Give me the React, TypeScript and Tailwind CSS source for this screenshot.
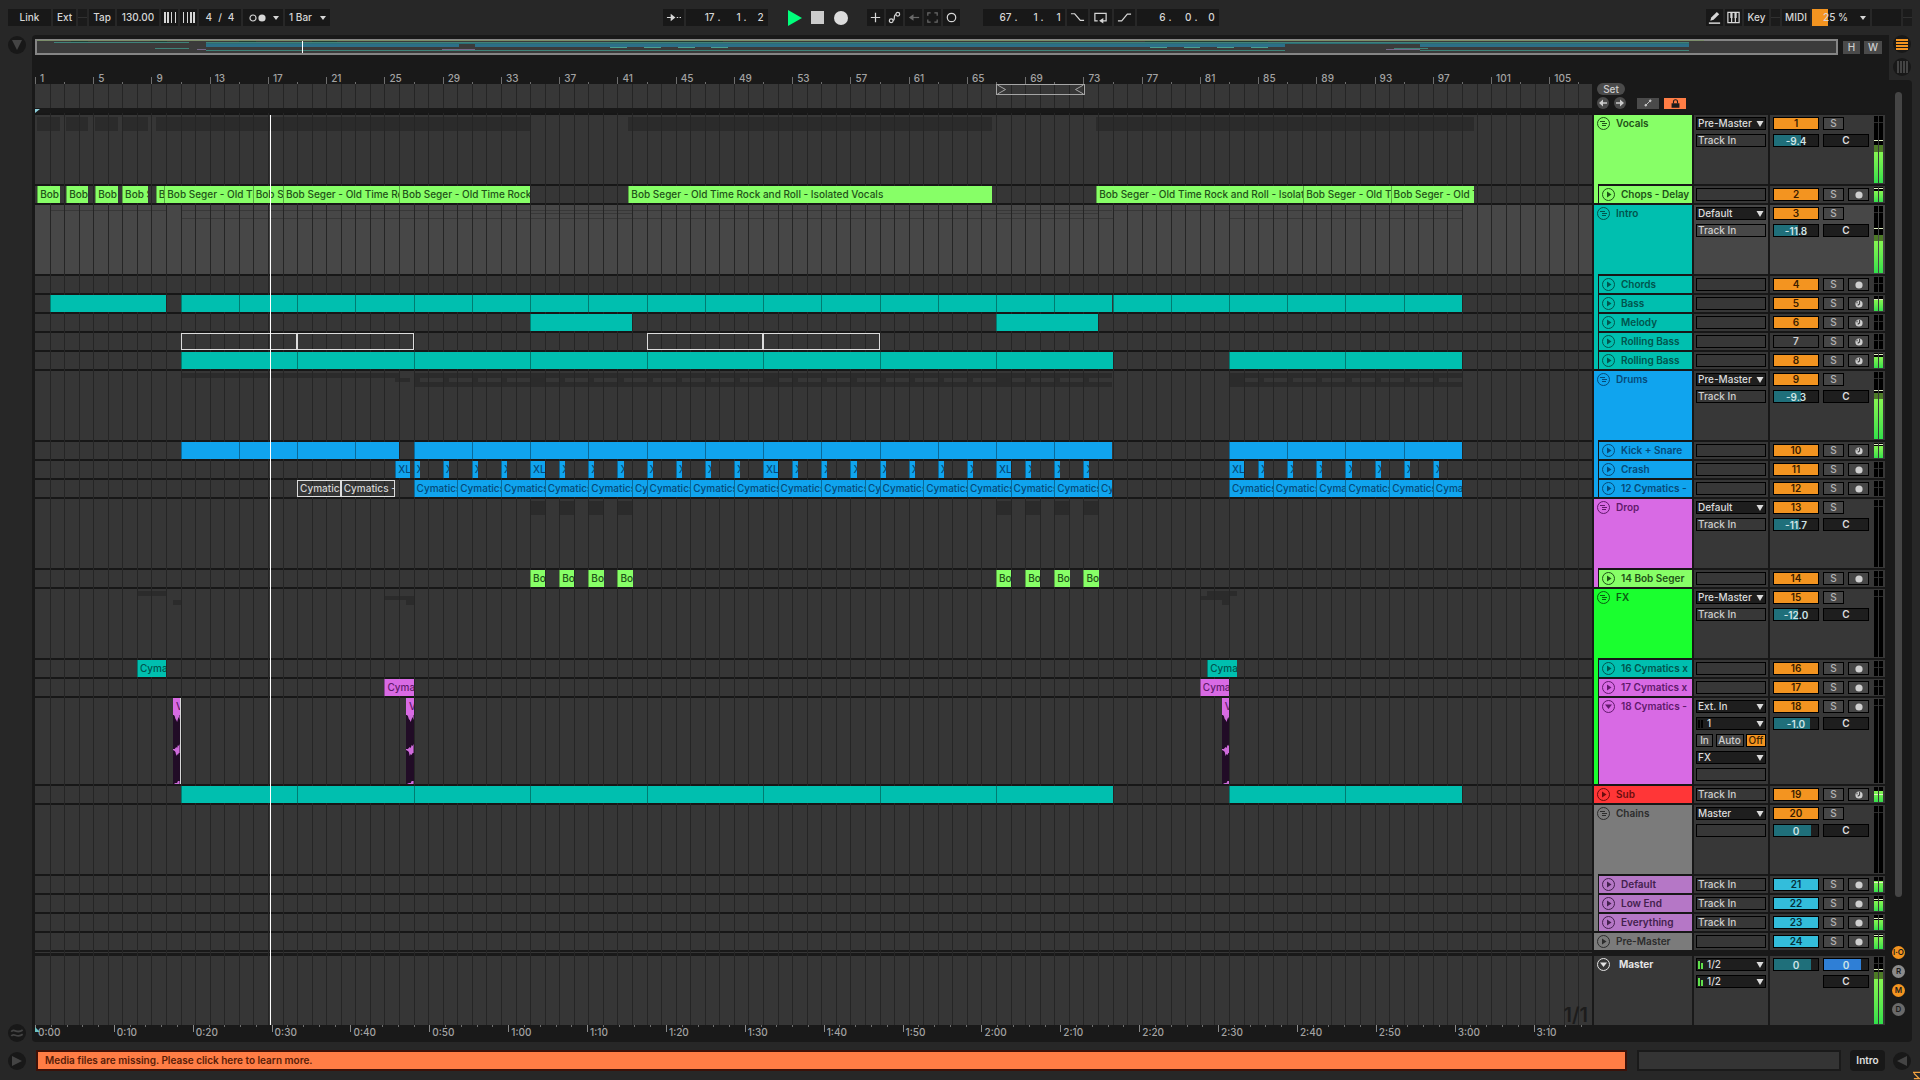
import { ReactNode } from "react";
import { clsx } from "clsx";

type Color =
	| "green"
	| "teal"
	| "blue"
	| "pink"
	| "lime"
	| "red"
	| "gray"
	| "purple"
	| "master";

interface Clip {
	from: number;
	to: number;
	label?: string;
	color?: Color;
	muted?: boolean;
	wave?: boolean;
	edge?: boolean;
}

interface Level {
	now: number;
	hold: number;
	peak: number;
}

interface Track {
	id: number;
	name: string;
	color: Color;
	size: "folder" | "small" | "tall";
	parent?: Color;
	output?: string;
	input?: string;
	volume?: string;
	fill?: number;
	arm?: "audio" | "midi";
	state?: "on" | "off" | "return";
	selected?: boolean;
	level?: Level;
	clips: Clip[];
}

// visible range of the arrangement
const BARS = 106.93;
const SECONDS = BARS * (240 / 130);

const COLORS: Record<Color, string> = {
	green: "bg-[#87ff67] text-[#1f5218]",
	teal: "bg-[#00bfaf] text-[#00554d]",
	blue: "bg-[#10a4ee] text-[#064a78]",
	pink: "bg-[#d86ae4] text-[#611a6c]",
	lime: "bg-[#1aff2f] text-[#0b5a12]",
	red: "bg-[#ff3637] text-[#6b0d0d]",
	gray: "bg-[#7b7b7b] text-[#2c2c2c]",
	purple: "bg-[#b577c6] text-[#43214d]",
	master: "bg-[#373737] text-[#e4e4e4]",
};

const HEIGHTS = {
	folder: "h-[71px]",
	small: "h-[19px]",
	tall: "h-[88px]",
};

const SEGER = "Bob Seger - Old Time Rock and Roll - Isolated Vocals";
const CYMATICS = "Cymatics - Loop";

const chain = (stops: number[], label?: string, rest: Partial<Clip> = {}): Clip[] =>
	stops.slice(1).map((to, index) => ({ from: stops[index], to, label, ...rest }));

const steps = (from: number, to: number, step: number, label?: string): Clip[] => {
	const stops: number[] = [];
	for (let bar = from; bar < to; bar += step) stops.push(bar);
	return chain([...stops, to], label);
};

const hits = (bars: number[], length: number, label: string): Clip[] =>
	bars.map((from) => ({ from, to: from + length, label }));

const tracks: Track[] = [
	{ id: 1, name: "Vocals", color: "green", size: "folder", output: "Pre-Master", input: "Track In", volume: "-9.4", fill: 61, level: { now: 47, hold: 57, peak: 62 }, clips: [] },
	{
		id: 2, name: "Chops - Delay", color: "green", size: "small", parent: "green", arm: "audio", level: { now: 72, hold: 76, peak: 84 },
		clips: [
			{ from: 1.15, to: 2.72, label: SEGER },
			{ from: 3.14, to: 4.65, label: SEGER },
			{ from: 5.13, to: 6.67, label: SEGER },
			{ from: 6.98, to: 8.78, label: SEGER },
			{ from: 9.3, to: 9.84, label: SEGER },
			...chain([9.88, 15.95, 18.03, 26.02, 35], SEGER),
			{ from: 41.75, to: 66.75, label: SEGER },
			...chain([73.88, 88.1, 94.1, 99.85], SEGER),
		],
	},
	{ id: 3, name: "Intro", color: "teal", size: "folder", output: "Default", input: "Track In", volume: "-11.8", fill: 54, selected: true, level: { now: 48, hold: 57, peak: 66 }, clips: [] },
	{ id: 4, name: "Chords", color: "teal", size: "small", parent: "teal", arm: "audio", clips: [] },
	{ id: 5, name: "Bass", color: "teal", size: "small", parent: "teal", arm: "midi", level: { now: 74, hold: 74, peak: 74 }, clips: [{ from: 2, to: 10 }, ...steps(11, 99, 4)] },
	{ id: 6, name: "Melody", color: "teal", size: "small", parent: "teal", arm: "midi", clips: [{ from: 35, to: 42 }, { from: 67, to: 74 }] },
	{ id: 7, name: "Rolling Bass", color: "teal", size: "small", parent: "teal", arm: "midi", state: "off", clips: [...chain([11, 19, 27], "", { muted: true }), ...chain([43, 51, 59], "", { muted: true })] },
	{ id: 8, name: "Rolling Bass", color: "teal", size: "small", parent: "teal", arm: "midi", level: { now: 76, hold: 76, peak: 88 }, clips: [...steps(11, 75, 8), ...steps(83, 99, 8)] },
	{ id: 9, name: "Drums", color: "blue", size: "folder", output: "Pre-Master", input: "Track In", volume: "-9.3", fill: 61, level: { now: 60, hold: 68, peak: 71 }, clips: [] },
	{ id: 10, name: "Kick + Snare", color: "blue", size: "small", parent: "blue", arm: "midi", level: { now: 78, hold: 78, peak: 90 }, clips: [...steps(11, 26, 4), ...steps(27, 75, 4), ...steps(83, 99, 4)] },
	{
		id: 11, name: "Crash", color: "blue", size: "small", parent: "blue", arm: "audio",
		clips: [
			...hits([25.74, 35, 51, 67, 83], 1, "XL Crash"),
			...hits([27, 29, 31, 33, 37, 39, 41, 43, 45, 47, 49, 53, 55, 57, 59, 61, 63, 65, 69, 71, 73, 85, 87, 89, 91, 93, 95, 97], 0.42, "XL Crash"),
		],
	},
	{
		id: 12, name: "12 Cymatics -", color: "blue", size: "small", parent: "blue", arm: "audio",
		clips: [
			...chain([19, 22, 25.7], CYMATICS, { muted: true }),
			...chain([27, 30, 33, 36, 39, 42, 43, 46, 49, 52, 55, 58, 59, 62, 65, 68, 71, 74, 75], CYMATICS),
			...chain([83, 86, 89, 91, 94, 97, 99], CYMATICS),
		],
	},
	{ id: 13, name: "Drop", color: "pink", size: "folder", output: "Default", input: "Track In", volume: "-11.7", fill: 57, clips: [] },
	{ id: 14, name: "14 Bob Seger", color: "green", size: "small", parent: "pink", arm: "audio", clips: hits([35, 37, 39, 41, 67, 69, 71, 73], 1.05, SEGER) },
	{ id: 15, name: "FX", color: "lime", size: "folder", output: "Pre-Master", input: "Track In", volume: "-12.0", fill: 54, clips: [] },
	{ id: 16, name: "16 Cymatics x", color: "teal", size: "small", parent: "lime", arm: "audio", clips: [{ from: 8, to: 10, label: CYMATICS }, { from: 81.5, to: 83.57, label: CYMATICS }] },
	{ id: 17, name: "17 Cymatics x", color: "pink", size: "small", parent: "lime", arm: "audio", clips: [{ from: 25, to: 27, label: CYMATICS }, { from: 81, to: 83, label: CYMATICS }] },
	{
		id: 18, name: "18 Cymatics -", color: "pink", size: "tall", parent: "lime", arm: "audio", volume: "-1.0", fill: 81,
		clips: [
			{ from: 10.48, to: 11, label: "Vox", wave: true, edge: true },
			{ from: 26.48, to: 27, label: "Vox", wave: true },
			{ from: 82.5, to: 83, label: "Vox", wave: true },
		],
	},
	{
		id: 19, name: "Sub", color: "red", size: "small", input: "Track In", arm: "midi", level: { now: 72, hold: 72, peak: 50 },
		clips: [...steps(11, 75, 8), ...steps(83, 99, 8)].map((clip) => ({ ...clip, color: "teal" as Color })),
	},
	{ id: 20, name: "Chains", color: "gray", size: "folder", output: "Master", input: "", volume: "0", fill: 83, clips: [] },
	{ id: 21, name: "Default", color: "purple", size: "small", parent: "gray", input: "Track In", arm: "audio", state: "return", level: { now: 72, hold: 72, peak: 62 }, clips: [] },
	{ id: 22, name: "Low End", color: "purple", size: "small", parent: "gray", input: "Track In", arm: "audio", state: "return", level: { now: 66, hold: 66, peak: 72 }, clips: [] },
	{ id: 23, name: "Everything", color: "purple", size: "small", parent: "gray", input: "Track In", arm: "audio", state: "return", level: { now: 68, hold: 68, peak: 76 }, clips: [] },
	{ id: 24, name: "Pre-Master", color: "gray", size: "small", arm: "audio", state: "return", level: { now: 78, hold: 78, peak: 88 }, clips: [] },
];

const at = (bar: number) => `${((bar - 1) / BARS) * 100}%`;
const span = (clip: Clip) => ({
	left: at(clip.from),
	width: `${((clip.to - clip.from) / BARS) * 100}%`,
});

// about three letters fit in one bar
const fit = (clip: Clip) => clip.label?.slice(0, Math.ceil((clip.to - clip.from) * 3.1 - 0.4));

const Cell = ({ className, children, label }: { className?: string; children?: ReactNode; label?: string }) => (
	<button
		type="button"
		aria-label={label}
		className={clsx("flex h-[17px] shrink-0 items-center justify-center bg-[#181818] text-[#d6d6d6]", className)}
	>
		{children}
	</button>
);

const Led = () => (
	<div className="flex h-[17px] w-[9px] shrink-0 items-center bg-[#1b1b1b]">
		<div className="h-px w-full bg-[#303030]" />
	</div>
);

const Glyph = ({ children, className = "h-[15px] w-[15px]" }: { children: ReactNode; className?: string }) => (
	<svg viewBox="0 0 16 16" className={className} fill="none" stroke="currentColor" strokeWidth="1.3">
		{children}
	</svg>
);

const Caret = () => (
	<svg viewBox="0 0 6 4" className="ml-auto h-[4px] w-[6px]" fill="currentColor">
		<path d="M0 0h6L3 4z" />
	</svg>
);

const Position = ({ values, label }: { values: string[]; label: string }) => (
	<button type="button" aria-label={label} className="flex h-[17px] w-[82px] shrink-0 items-center justify-end bg-[#181818] pr-[4px] text-[#d6d6d6]">
		{values.map((value, index) => (
			<span key={index} className={clsx("flex justify-end gap-[3px]", index === 2 ? "w-[17px]" : "w-[26px]")}>
				<span>{value}</span>
				{index < 2 && <span>.</span>}
			</span>
		))}
	</button>
);

const Toolbar = () => (
	<header className="flex h-[35px] items-start px-[8px] pt-[9px]">
		<div className="flex gap-[2px]">
			<Cell className="w-[43px]">Link</Cell>
			<Cell className="w-[23px]">Ext</Cell>
			<Led />
			<Cell className="w-[26px]">Tap</Cell>
			<Cell className="w-[42px]">130.00</Cell>
			<Cell className="w-[17px]" label="Nudge down">
				<svg viewBox="0 0 12 11" className="h-[11px] w-[12px]" fill="currentColor">
					<path d="M0 0h2v11H0zM3 0h2v11H3zM7 0h1v11H7zM11 0h1v11h-1z" />
				</svg>
			</Cell>
			<Cell className="w-[17px]" label="Nudge up">
				<svg viewBox="0 0 12 11" className="h-[11px] w-[12px]" fill="currentColor">
					<path d="M0 0h1v11H0zM4 0h1v11H4zM7 0h2v11H7zM10 0h2v11h-2z" />
				</svg>
			</Cell>
			<Cell className="w-[42px] gap-[6px]">
				<span>4</span>
				<span>/</span>
				<span>4</span>
			</Cell>
			<Cell className="w-[40px] pr-[4px] pl-[6px]" label="Metronome">
				<svg viewBox="0 0 17 8" className="h-[8px] w-[17px]">
					<circle cx="4" cy="4" r="3" fill="none" stroke="currentColor" strokeWidth="1.2" />
					<circle cx="13" cy="4" r="3.6" fill="currentColor" />
				</svg>
				<Caret />
			</Cell>
			<Cell className="w-[45px] pr-[4px] pl-[4px]">
				<span>1 Bar</span>
				<Caret />
			</Cell>
		</div>
		<div className="flex-[333]" />
		<div className="flex items-center gap-[2px]">
			<Cell className="w-[21px]" label="Follow">
				<Glyph className="h-[15px] w-[17px]">
					<path d="M1 8h5M11.5 8h1.5M14.5 8h1.5" />
					<path d="M5 4l5 4-5 4z" fill="currentColor" stroke="none" />
				</Glyph>
			</Cell>
			<Position values={["17", "1", "2"]} label="Arrangement position" />
			<button type="button" aria-label="Play" className="ml-[18px] text-[#00ff7b]">
				<svg viewBox="0 0 14 16" className="h-[16px] w-[14px]" fill="currentColor">
					<path d="M0 0l14 8-14 8z" />
				</svg>
			</button>
			<button type="button" aria-label="Stop" className="ml-[7px] h-[13px] w-[13px] bg-[#cbcbcb]" />
			<button type="button" aria-label="Record" className="ml-[8px] h-[14px] w-[14px] rounded-full bg-[#dcdcdc]" />
			<Cell className="ml-[17px] w-[17px]" label="Overdub">
				<Glyph>
					<path d="M8 3v10M3 8h10" />
				</Glyph>
			</Cell>
			<Cell className="w-[17px]" label="Automation arm">
				<Glyph>
					<circle cx="4.5" cy="11.5" r="2" />
					<circle cx="11.5" cy="4.5" r="2" />
					<path d="M6.5 11c2.5 0 0-6 3-6" />
				</Glyph>
			</Cell>
			<Cell className="w-[17px]" label="Re-enable automation">
				<Glyph className="h-[15px] w-[15px] text-[#696969]">
					<path d="M6 8h8" />
					<path d="M8 4.5L3 8l5 3.5z" fill="currentColor" stroke="none" />
				</Glyph>
			</Cell>
			<Cell className="w-[17px]" label="Capture">
				<Glyph className="h-[15px] w-[15px] text-[#696969]">
					<path d="M3 6V3h3M10 3h3v3M13 10v3h-3M6 13H3v-3" />
				</Glyph>
			</Cell>
			<Cell className="w-[17px]" label="Session record">
				<Glyph>
					<circle cx="8" cy="8" r="4.5" />
				</Glyph>
			</Cell>
			<div className="w-[19px]" />
			<Position values={["67", "1", "1"]} label="Loop start" />
			<Cell className="w-[21px]" label="Punch in">
				<Glyph>
					<path d="M1 4h4l6 7h4" />
				</Glyph>
			</Cell>
			<Cell className="w-[22px]" label="Loop">
				<Glyph>
					<path d="M5 11.5H2v-8h12v8H9" />
					<path d="M11 8.500v6L6.500 11.500z" fill="currentColor" stroke="none" />
				</Glyph>
			</Cell>
			<Cell className="w-[21px]" label="Punch out">
				<Glyph>
					<path d="M1 11.500h4l6-7h4" />
				</Glyph>
			</Cell>
			<Position values={["6", "0", "0"]} label="Loop length" />
		</div>
		<div className="flex-[488]" />
		<div className="flex gap-[2px]">
			<Cell className="w-[17px]" label="Draw mode">
				<Glyph>
					<path d="M2 14h12" strokeWidth="1.6" />
					<path d="M3.500 11.500l1-3.500 6-6 2.500 2.500-6 6z" fill="currentColor" stroke="none" />
				</Glyph>
			</Cell>
			<Cell className="w-[17px]" label="Computer MIDI keyboard">
				<Glyph>
					<path d="M2 2.500h12v11H2zM6 8v6M10 8v6" />
					<path d="M5.800 2v6.500M10.200 2v6.500" strokeWidth="2.4" />
				</Glyph>
			</Cell>
			<Cell className="w-[25px]">Key</Cell>
			<Led />
			<Cell className="w-[28px]">MIDI</Cell>
			<div className="relative flex h-[17px] w-[58px] items-center bg-[#181818] pr-[4px] text-[#d6d6d6]">
				<div className="h-full w-[16px] bg-[#f39420]" />
				<span className="absolute left-[11px]">25 %</span>
				<Caret />
			</div>
			<div className="h-[17px] w-[29px] bg-[#181818]" />
			<Led />
		</div>
	</header>
);

const mini = [
	{ y: 1, h: 1, color: "#7b8d6a", clips: [[1, 99.85]] },
	{ y: 2, h: 1, color: "#243c35", clips: [[3, 4], [7.7, 8.7], [13, 14], [17.3, 18.8], [35, 41.7], [66.7, 74]] },
	{ y: 3, h: 1, color: "#3f8379", clips: [[2, 10], [11, 99]] },
	{ y: 4, h: 1, color: "#2c6d77", clips: [[11, 99]] },
	{ y: 5, h: 3, color: "#2d6f88", clips: [[11, 26], [27, 75], [83, 99]] },
	{ y: 8, h: 1, color: "#4aa08f", clips: [[35, 36], [37, 38], [39, 40], [41, 42], [67, 68], [69, 70], [71, 72], [73, 74]] },
	{ y: 9, h: 1, color: "#3f8379", clips: [[8, 10], [81.5, 83.5]] },
	{ y: 10, h: 1, color: "#76688a", clips: [[10.5, 11], [25, 27], [81, 83]] },
	{ y: 11, h: 1, color: "#3f8379", clips: [[11, 75], [83, 99]] },
];

const Overview = () => (
	<div className="flex h-[16px] items-center">
		<div className="relative h-full flex-1 border-2 border-[#858585] bg-[#3b3b3b]">
			<svg viewBox="0 0 106.7 16" preserveAspectRatio="none" className="absolute -top-[2px] left-0 h-[16px] w-full" shapeRendering="crispEdges">
				{mini.map((lane) =>
					lane.clips.map(([from, to]) => (
						<rect key={`${lane.y}-${from}`} x={from - 1} y={lane.y} width={to - from} height={lane.h} fill={lane.color} />
					))
				)}
				<rect x={15.72} y={2} width={0.07} height={12} fill="#ffffff" />
			</svg>
		</div>
		<button type="button" className="ml-[5px] h-[13px] w-[17px] bg-[#4a4a4a] leading-[13px] text-[#cccccc]">
			H
		</button>
		<button type="button" className="mr-[3px] ml-[4px] h-[13px] w-[18px] bg-[#4a4a4a] leading-[13px] text-[#cccccc]">
			W
		</button>
	</div>
);

const GridLines = () => (
	<div className="pointer-events-none absolute inset-0 z-10">
		{Array.from({ length: 106 }).map((_, index) => (
			<span key={index} className="absolute inset-y-0 w-px bg-[#252525]" style={{ left: at(index + 2) }} />
		))}
	</div>
);

const BarRuler = () => (
	<>
		<div className="relative h-[29px] text-[#a3a3a3]">
			{Array.from({ length: 54 }).map((_, index) => {
				const bar = index * 2 + 1;
				return bar % 4 === 1 ? (
					<span key={bar} className="absolute bottom-0 h-[7px] border-l border-[#6f6f6f]" style={{ left: at(bar) }}>
						<span className="absolute bottom-0 left-[4px] leading-[11px]">{bar}</span>
					</span>
				) : (
					<span key={bar} className="absolute bottom-0 h-[2px] w-px bg-[#6f6f6f]" style={{ left: at(bar) }} />
				);
			})}
		</div>
		<div className="relative h-[24px] bg-[#373737]">
			<GridLines />
			<div className="absolute top-0 z-20 flex h-[11px] justify-between border border-[#a5a5a5] text-[#a5a5a5]" style={span({ from: 67, to: 73.1 })}>
				<svg viewBox="0 0 9 9" className="h-[9px] w-[9px]" fill="none" stroke="currentColor">
					<path d="M0.500 0l8 4.500-8 4.500" />
				</svg>
				<svg viewBox="0 0 9 9" className="h-[9px] w-[9px]" fill="none" stroke="currentColor">
					<path d="M8.500 0l-8 4.500 8 4.500" />
				</svg>
			</div>
		</div>
		<svg viewBox="0 0 5 5" className="h-[5px] w-[5px]" fill="#8fd0dc">
			<path d="M0 1h5L0 5z" />
		</svg>
	</>
);

const TimeRuler = () => (
	<div className="relative h-[17px] overflow-hidden text-[#a3a3a3]">
		{Array.from({ length: 99 }).map((_, index) => {
			const seconds = index * 2;
			const left = `${(seconds / SECONDS) * 100}%`;
			return seconds % 10 === 0 ? (
				<span key={seconds} className="absolute top-0 h-[7px] border-l border-[#8a8a8a]" style={{ left }}>
					<span className="absolute top-[2px] left-[2px] leading-[11px]">
						{Math.floor(seconds / 60)}:{String(seconds % 60).padStart(2, "0")}
					</span>
				</span>
			) : (
				<span key={seconds} className="absolute top-0 h-[2px] w-px bg-[#6f6f6f]" style={{ left }} />
			);
		})}
		<svg viewBox="0 0 5 5" className="absolute top-[2px] left-0 h-[5px] w-[5px]" fill="#6cc4c4">
			<path d="M0 0l5 5H0z" />
		</svg>
	</div>
);

const ClipBox = ({ clip, color }: { clip: Clip; color: Color }) => {
	if (clip.wave) {
		return (
			<div className={clsx("absolute inset-y-0 z-20 flex flex-col overflow-hidden", clip.edge && "border-r border-[#d8d8d8]")} style={span(clip)}>
				<div className={clsx("h-[17px] shrink-0 pl-[3px] leading-[17px]", COLORS[color])}>{fit(clip)}</div>
				<svg viewBox="0 0 8 69" preserveAspectRatio="none" className="min-h-0 w-full flex-1 bg-[#210c26]" fill="#cf6bdb">
					<path d="M1 0h7v5L7 2 6 4 5 7 4 5 3 4 2 1zM0 34h2l1-1 1-1 1 1 1-3 1 1 1-2v9H7l-1 2-1-1-1 2-1-4-1-1-2-1zM1 69l2-1h2l1-2h2v3z" />
				</svg>
			</div>
		);
	}
	return (
		<div
			className={clsx(
				"absolute inset-y-0 z-20 overflow-hidden whitespace-nowrap",
				clip.label && "pl-[2px]",
				clip.muted ? "border border-[#dcdcdc] leading-[15px] text-[#d4d4d4]" : ["border-l border-l-black/35 leading-[17px]", COLORS[color]]
			)}
			style={span(clip)}
		>
			{fit(clip)}
		</div>
	);
};

const FolderContent = ({ group, faint }: { group: Track[]; faint?: boolean }) => (
	<div className="mt-[2px] flex h-[14px] flex-col">
		{group.map((track) => (
			<div key={track.id} className="relative flex-1">
				{track.clips
					.filter((clip) => !clip.muted)
					.map((clip) => (
						<span key={clip.from} className={clsx("absolute top-0 bg-black/20", faint ? "h-px" : "bottom-0")} style={span(clip)} />
					))}
			</div>
		))}
	</div>
);

const childrenOf = (track: Track) => {
	const start = tracks.indexOf(track) + 1;
	const end = tracks.findIndex((item, index) => index >= start && !item.parent);
	return tracks.slice(start, end);
};

const Lane = ({ track }: { track: Track }) => (
	<div className={clsx("bg-[#171717] pt-[2px]", HEIGHTS[track.size])}>
		<div className={clsx("relative flex h-full flex-col", track.selected ? "bg-[#474747]" : "bg-[#363636]")}>
			{track.size === "folder" && <FolderContent group={childrenOf(track)} faint={track.selected} />}
			{track.clips.map((clip) => (
				<ClipBox key={clip.from} clip={clip} color={clip.color ?? track.color} />
			))}
		</div>
	</div>
);

const TrackIcon = ({ kind }: { kind: "folder" | "small" | "tall" }) => (
	<svg viewBox="0 0 13 13" className="h-[13px] w-[13px] shrink-0" fill="none" stroke="currentColor">
		<circle cx="6.5" cy="6.5" r="6" />
		{kind === "folder" && <path d="M3 4.500h5M5 6.500h5M5 8.500h4" />}
		{kind === "small" && <path d="M5 3.500L9.500 6.500l-4.500 3z" fill="currentColor" stroke="none" />}
		{kind === "tall" && <path d="M3 4.500h7l-3.500 4.500z" fill="currentColor" stroke="none" />}
	</svg>
);

const Dropdown = ({ value, label, meter }: { value: string; label: string; meter?: "on" | "off" }) => (
	<div className="relative flex h-[13px] items-center border border-black bg-[#1e1e1e] text-[#dcdcdc]">
		{meter && (
			<span className="pointer-events-none absolute left-[1px] flex h-[8px] items-end gap-px">
				<span className={clsx("w-[2px]", meter === "on" ? "h-[8px] bg-[#5fe04c]" : "h-[8px] bg-black")} />
				<span className={clsx("w-[2px]", meter === "on" ? "h-[6px] bg-[#5fe04c]" : "h-[8px] bg-black")} />
			</span>
		)}
		<select aria-label={label} className={clsx("h-full w-full appearance-none bg-transparent leading-[11px] outline-none", meter ? "pl-[10px]" : "pl-[1px]")}>
			<option>{value}</option>
		</select>
		<svg viewBox="0 0 8 6" className="pointer-events-none absolute right-[1px] h-[6px] w-[8px]" fill="currentColor">
			<path d="M0.500 0h7L4 6z" />
		</svg>
	</div>
);

const InputSlot = ({ value }: { value?: string }) => (
	<button type="button" aria-label={value || "Input"} className="block h-[13px] w-full shrink-0 border border-black pl-[1px] text-left leading-[11px] text-[#cfcfcf]">
		{value}
	</button>
);

const Volume = ({ value, fill, label, tone = "bg-[#1f6f7a]" }: { value: string; fill: number; label: string; tone?: string }) => (
	<div className="relative h-[13px] border border-black bg-[#1e1e1e]">
		<div className={clsx("h-full", tone)} style={{ width: `${fill}%` }} />
		<input aria-label={label} defaultValue={value} className="absolute inset-0 h-full w-full bg-transparent text-center font-semibold text-[#cfe4e6] outline-none" />
	</div>
);

const Pan = ({ className = "col-span-2" }: { className?: string }) => (
	<button type="button" aria-label="Pan" className={clsx("h-[13px] border border-black bg-[#1e1e1e] leading-[11px] font-semibold text-[#dcdcdc]", className)}>
		C
	</button>
);

const Meter = ({ level }: { level?: Level }) => (
	<div className="mr-[2px] ml-auto flex gap-px py-px">
		{[0, 1].map((channel) => (
			<div key={channel} className="relative h-full w-[4px] bg-black">
				<span className="absolute inset-x-0 top-[6px] h-px bg-[#2c2c2c]" />
				{level && (
					<>
						<span className="absolute inset-x-0 bottom-0 bg-[#4c7a26]" style={{ height: `${level.hold}%` }} />
						<span className="absolute inset-x-0 bottom-0 bg-linear-to-t from-[#2fe04a] to-[#84f552]" style={{ height: `${level.now}%` }} />
						<span className="absolute inset-x-0 h-px bg-[#e0f0c0]" style={{ bottom: `${level.peak}%` }} />
					</>
				)}
			</div>
		))}
	</div>
);

const ArmIcon = ({ kind }: { kind: "audio" | "midi" }) => (
	<svg viewBox="0 0 8 8" className="h-[8px] w-[8px]">
		<circle cx="4" cy="4" r="3.600" fill="#cfcfcf" />
		{kind === "midi" && <path d="M4.600 1v3.400H3.200v1.200M2 1.600v1.800" fill="none" stroke="#3a3a3a" />}
	</svg>
);

const NUMBER = {
	on: "bg-[#f39420] text-[#3a1d00]",
	off: "bg-[#3a3a3a] text-[#d0d0d0]",
	return: "bg-[#33bddb] text-[#06303a]",
};

const TrackHeader = ({ track }: { track: Track }) => {
	const surface = track.selected ? "bg-[#474747]" : "bg-[#373737]";
	return (
		<div className={clsx("flex gap-[2px] bg-[#171717]", HEIGHTS[track.size])}>
			<div className="flex w-[98px]">
				{track.parent && <div className={clsx("mr-px w-[4px]", COLORS[track.parent])} />}
				<button type="button" className={clsx("mt-[2px] flex min-w-0 flex-1 items-start gap-[6px] overflow-hidden pt-[2px] pl-[3px] font-semibold whitespace-nowrap", COLORS[track.color])}>
					<TrackIcon kind={track.size} />
					<span className="leading-[13px]">{track.name}</span>
				</button>
			</div>
			<div className={clsx("mt-[2px] flex w-[74px] flex-col gap-[4px] px-[2px] pt-[2px]", surface)}>
				{track.size === "tall" ? (
					<>
						<Dropdown value="Ext. In" label="Input type" />
						<Dropdown value="1" label="Input channel" meter="off" />
						<div className="flex h-[13px] justify-between text-[#cfcfcf]">
							<button type="button" className="w-[17px] border border-black bg-[#444444] leading-[11px]">In</button>
							<button type="button" className="w-[28px] border border-black bg-[#444444] leading-[11px]">Auto</button>
							<button type="button" className="w-[20px] border border-black bg-[#f39420] leading-[11px] text-[#3a1d00]">Off</button>
						</div>
						<Dropdown value="FX" label="Output type" />
						<InputSlot />
					</>
				) : (
					<>
						{track.output && <Dropdown value={track.output} label={`${track.name} output`} />}
						<InputSlot value={track.input} />
					</>
				)}
			</div>
			<div className={clsx("mt-[2px] flex flex-1 pl-[3px]", surface)}>
				<div className="grid grid-cols-[46px_21px_21px] content-start gap-[4px] pt-[2px]">
					<button type="button" className={clsx("h-[13px] border border-black leading-[11px] font-semibold", NUMBER[track.state ?? "on"])}>{track.id}</button>
					<button type="button" className="h-[13px] border border-black bg-[#464646] leading-[11px] text-[#b4b4b4]">S</button>
					{track.arm ? (
						<button type="button" aria-label={`Arm ${track.name}`} className="flex h-[13px] items-center justify-center border border-black bg-[#464646]">
							<ArmIcon kind={track.arm} />
						</button>
					) : (
						<span />
					)}
					{track.volume && (
						<>
							<Volume value={track.volume} fill={track.fill ?? 0} label={`${track.name} volume`} />
							<Pan />
						</>
					)}
				</div>
				<Meter level={track.level} />
			</div>
		</div>
	);
};

const MasterHeader = () => (
	<div className="flex h-[69px] gap-[2px]">
		<div className={clsx("flex w-[98px] items-start gap-[9px] pt-[2px] pl-[3px] font-bold", COLORS.master)}>
			<TrackIcon kind="tall" />
			<span className="leading-[13px]">Master</span>
		</div>
		<div className="flex w-[74px] flex-col gap-[4px] bg-[#373737] px-[2px] pt-[2px]">
			<Dropdown value="1/2" label="Cue output" meter="on" />
			<Dropdown value="1/2" label="Master output" meter="on" />
		</div>
		<div className="flex flex-1 bg-[#373737] pl-[3px]">
			<div className="grid grid-cols-[46px_46px] content-start gap-[4px] pt-[2px]">
				<Volume value="0" fill={83} label="Master volume" />
				<Volume value="0" fill={83} label="Cue volume" tone="bg-[#2f7fd6]" />
				<Pan className="col-start-2" />
			</div>
			<Meter level={{ now: 67, hold: 77, peak: 80 }} />
		</div>
	</div>
);

const LocatorControls = () => (
	<div className="h-[58px] pt-[28px] pl-[3px] text-[#cccccc]">
		<button type="button" className="block h-[12px] w-[28px] rounded-full bg-[#4a4a4a] leading-[12px]">Set</button>
		<div className="mt-[2px] flex items-center">
			{["Previous locator", "Next locator"].map((label, index) => (
				<button key={label} type="button" aria-label={label} className={clsx("flex h-[12px] w-[12px] items-center justify-center rounded-full bg-[#4a4a4a]", index === 1 && "ml-[5px] rotate-180")}>
					<svg viewBox="0 0 8 8" className="h-[8px] w-[8px]" fill="currentColor">
						<path d="M4 0.500v2.700h4v1.600H4v2.700L0 4z" />
					</svg>
				</button>
			))}
			<button type="button" aria-label="Automation mode" className="ml-[11px] flex h-[11px] w-[22px] items-center justify-center bg-[#4a4a4a]">
				<svg viewBox="0 0 9 9" className="h-[8px] w-[8px]" fill="currentColor" stroke="currentColor">
					<path d="M2 7l5-5" />
					<circle cx="2" cy="7" r="1" />
					<circle cx="7" cy="2" r="1" />
				</svg>
			</button>
			<button type="button" aria-label="Lock envelopes" className="ml-[5px] flex h-[11px] w-[22px] items-center justify-center bg-[#ff7d45] text-[#1c1c1c]">
				<svg viewBox="0 0 8 8" className="h-[9px] w-[9px]" fill="none" stroke="currentColor">
					<path d="M2.200 4V2.500a1.800 1.800 0 013.600 0V4" />
					<path d="M0.500 3.800h7v4h-7z" fill="currentColor" stroke="none" />
				</svg>
			</button>
		</div>
	</div>
);

const RoundButton = ({ label, children }: { label: string; children: ReactNode }) => (
	<button type="button" aria-label={label} className="flex h-[18px] w-[18px] items-center justify-center rounded-full bg-[#181818] text-[#444444]">
		{children}
	</button>
);

const Sidebar = () => (
	<div className="flex w-[23px] flex-col">
		<div className="flex h-[45px] flex-col items-center gap-[5px] pl-[3px]">
			<RoundButton label="Arrangement view">
				<svg viewBox="0 0 12 11" className="h-[11px] w-[12px]" fill="#f39420">
					<path d="M0 0h12v2H0zM0 3h12v2H0zM0 6h12v2H0zM0 9h12v2H0z" />
				</svg>
			</RoundButton>
			<RoundButton label="Session view">
				<svg viewBox="0 0 11 12" className="h-[12px] w-[11px]" fill="currentColor">
					<path d="M0 0h2v12H0zM3 0h2v12H3zM6 0h2v12H6zM9 0h2v12H9z" />
				</svg>
			</RoundButton>
		</div>
		<div className="flex flex-1 flex-col rounded-tr rounded-br bg-[#191919] pt-[12px] pr-[4px]">
			<div className="mx-auto h-[805px] w-[7px] rounded-full bg-[#454545]" />
			<div className="mt-[49px] flex flex-col items-center gap-[6px] text-[8px] font-semibold text-[#1c1c1c]">
				{["I·O", "R", "M", "D"].map((name, index) => (
					<button key={name} type="button" className={clsx("h-[13px] w-[13px] rounded-full text-center leading-[13px]", index === 0 || index === 2 ? "bg-[#f39420]" : index === 1 ? "bg-[#8b8b8b]" : "bg-[#6a6a6a]")}>
						{name}
					</button>
				))}
			</div>
		</div>
	</div>
);

const Footer = () => (
	<footer className="flex h-[38px] items-start pt-[8px] pr-[9px] pl-[8px]">
		<div className="mt-[2px]">
			<RoundButton label="Show info">
				<svg viewBox="0 0 10 10" className="h-[10px] w-[10px]" fill="currentColor">
					<path d="M0 0l10 5-10 5z" />
				</svg>
			</RoundButton>
		</div>
		<button type="button" className="ml-[10px] h-[21px] flex-1 border-2 border-[#3c1108] bg-[#ff7d45] pl-[7px] text-left leading-[17px] font-semibold text-[#571c08]">
			Media files are missing. Please click here to learn more.
		</button>
		<div className="ml-[10px] h-[21px] w-[204px] border-2 border-[#1a1a1a] bg-[#343434]" />
		<div className="ml-[9px] h-[21px] w-[35px] rounded-sm bg-[#181818] text-center leading-[21px] font-semibold text-[#e0e0e0]">Intro</div>
		<div className="mt-[2px] ml-[8px]">
			<RoundButton label="Show devices">
				<svg viewBox="0 0 10 10" className="h-[10px] w-[10px]" fill="currentColor">
					<path d="M10 0L0 5l10 5z" />
				</svg>
			</RoundButton>
		</div>
	</footer>
);

const App = () => {
	return (
		<div className="relative flex min-h-screen min-w-[1200px] flex-col overflow-hidden bg-[#272727] font-['Inter',sans-serif] text-[10px] font-medium select-none">
			<Toolbar />
			<main className="flex pr-[8px]">
				<div className="flex w-[32px] flex-col justify-between pt-[1px] pl-[8px]">
					<RoundButton label="Show browser">
						<svg viewBox="0 0 10 10" className="h-[10px] w-[10px]" fill="currentColor">
							<path d="M0 0h10L5 10z" />
						</svg>
					</RoundButton>
					<RoundButton label="Groove pool">
						<Glyph className="h-[14px] w-[14px]">
							<path d="M1.500 6.500c3-5 6 3.500 13-2M1.500 11.500c3-5 6 3.500 13-2" strokeWidth="2" />
						</Glyph>
					</RoundButton>
				</div>
				<div className="flex min-w-0 flex-1 flex-col rounded-tl rounded-bl bg-[#191919] pt-[4px] pr-[4px] pl-[3px]">
					<Overview />
					<div className="flex gap-[2px]">
						<div className="min-w-0 flex-1">
							<BarRuler />
							<div className="relative">
								<GridLines />
								{tracks.map((track) => (
									<Lane key={track.id} track={track} />
								))}
								<div className="mt-[2px] mb-[3px] h-px bg-[#363636]" />
								<div className="relative flex h-[69px] items-end justify-end bg-[#363636] pr-[4px]">
									<span className="relative z-20 text-[20px] leading-[20px] font-semibold text-[#1c1c1c]">1/1</span>
								</div>
								<div className="absolute top-[2px] bottom-0 z-30 w-px bg-white" style={{ left: at(17.13) }} />
							</div>
							<TimeRuler />
						</div>
						<div className="w-[291px]">
							<LocatorControls />
							{tracks.map((track) => (
								<TrackHeader key={track.id} track={track} />
							))}
							<div className="h-[6px]" />
							<MasterHeader />
						</div>
					</div>
				</div>
				<Sidebar />
			</main>
			<Footer />
			<svg viewBox="0 0 8 9" className="absolute right-0 bottom-0 h-[9px] w-[7px]" fill="none" stroke="#f0a040">
				<path d="M0 1h8M1 2l6 6M1 8h7" strokeWidth="1.5" />
			</svg>
		</div>
	);
};

export default App;
